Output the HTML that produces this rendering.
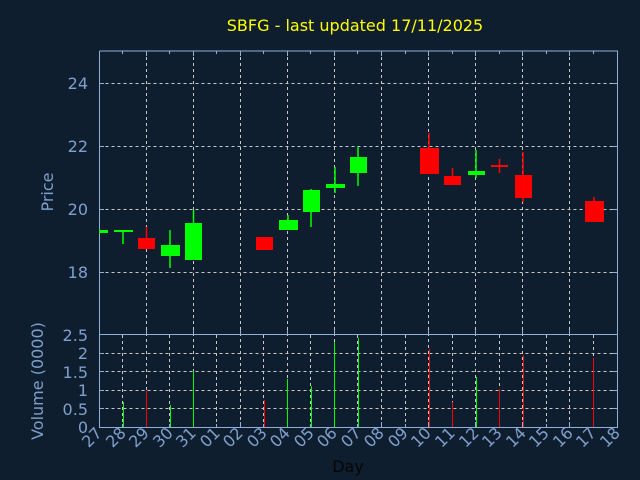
<!DOCTYPE html>
<html><head><meta charset="utf-8"><style>
html,body{margin:0;padding:0;background:#0f1e2f;width:640px;height:480px;overflow:hidden}
svg{display:block}
text{font-family:"DejaVu Sans","Liberation Sans",sans-serif}
</style></head><body>
<svg width="640" height="480" xmlns="http://www.w3.org/2000/svg">
<rect width="640" height="480" fill="#0f1e2f"/>
<text x="355" y="31" fill="#ffff00" font-size="16" text-anchor="middle">SBFG - last updated 17/11/2025</text>
<g stroke="#c8c8c8" stroke-width="1" stroke-dasharray="3,3" fill="none">
<path d="M99.5 83.5H617M99.5 146.5H617M99.5 209.5H617M99.5 272.5H617"/>
<path d="M146.5 51V427M193.5 51V427M240.5 51V427M287.5 51V427M334.5 51V427M381.5 51V427M428.5 51V427M475.5 51V427M522.5 51V427M569.5 51V427"/>
<path d="M122.5 335V427M169.5 335V427M216.5 335V427M263.5 335V427M310.5 335V427M357.5 335V427M405.5 335V427M452.5 335V427M499.5 335V427M546.5 335V427M593.5 335V427"/>
<path d="M99.5 353.5H617M99.5 371.5H617M99.5 390.5H617M99.5 408.5H617"/>
</g>
<g stroke="#8fb0d8" stroke-width="1" fill="none">
<path d="M99.5 51V427.5H617.5V51H99.5M99.5 334.5H617.5"/>
<path d="M99 83.5h5M99 146.5h5M99 209.5h5M99 272.5h5M617 83.5h-5M617 146.5h-5M617 209.5h-5M617 272.5h-5M99 353.5h5M99 371.5h5M99 390.5h5M99 408.5h5M617 353.5h-5M617 371.5h-5M617 390.5h-5M617 408.5h-5"/>
<path d="M146.5 51v5M193.5 51v5M240.5 51v5M287.5 51v5M334.5 51v5M381.5 51v5M428.5 51v5M475.5 51v5M522.5 51v5M569.5 51v5"/>
<path d="M122.5 51v3M169.5 51v3M216.5 51v3M263.5 51v3M310.5 51v3M357.5 51v3M405.5 51v3M452.5 51v3M499.5 51v3M546.5 51v3M593.5 51v3"/>
<path d="M146.5 427v-5M193.5 427v-5M240.5 427v-5M287.5 427v-5M334.5 427v-5M381.5 427v-5M428.5 427v-5M475.5 427v-5M522.5 427v-5M569.5 427v-5"/>
<path d="M122.5 427v-3M169.5 427v-3M216.5 427v-3M263.5 427v-3M310.5 427v-3M357.5 427v-3M405.5 427v-3M452.5 427v-3M499.5 427v-3M546.5 427v-3M593.5 427v-3"/>
<path d="M146.5 335v-5M193.5 335v-5M240.5 335v-5M287.5 335v-5M334.5 335v-5M381.5 335v-5M428.5 335v-5M475.5 335v-5M522.5 335v-5M569.5 335v-5"/>
</g>
<!-- candles -->
<g stroke-width="1.5">
<path stroke="#00ff00" d="M123 232V244M170 230V268M193.5 210V260M288 215V222M311 189V227M335 167V193M358 147V186M476 150V178"/>
<path stroke="#ff0000" d="M146.5 227V240M429 133V150M452.5 168V178M499.5 159V173M523 152V202M594 197V203"/>
</g>
<g fill="#00ff00">
<rect x="99" y="230" width="9" height="3"/>
<rect x="114" y="230" width="19" height="2"/>
<rect x="161" y="245" width="19" height="11"/>
<rect x="185" y="223" width="17" height="37"/>
<rect x="279" y="220" width="19" height="10"/>
<rect x="303" y="190" width="17" height="22"/>
<rect x="326" y="184" width="19" height="4"/>
<rect x="350" y="157" width="17" height="16"/>
<rect x="468" y="171" width="17" height="4"/>
</g>
<g fill="#ff0000">
<rect x="138" y="238" width="17" height="11"/>
<rect x="256" y="237" width="17" height="13"/>
<rect x="420" y="148" width="19" height="26"/>
<rect x="444" y="176" width="17" height="9"/>
<rect x="491" y="165" width="17" height="2"/>
<rect x="515" y="175" width="17" height="23"/>
<rect x="585" y="201" width="19" height="21"/>
</g>
<!-- volume -->
<g stroke-width="1">
<path stroke="#00ff00" d="M123.5 427V402M170.5 427V405M193.5 427V371M287.5 427V379M311.5 427V386M334.5 427V342M358.5 427V338M476.5 427V377"/>
<path stroke="#ff0000" d="M146.5 427V391M264.5 427V400M429.5 427V349M452.5 427V402M499.5 427V389M523.5 427V355M593.5 427V358"/>
</g>
<g fill="#7fa0cc" font-size="16" text-anchor="end">
<text x="88" y="89">24</text><text x="88" y="152">22</text><text x="88" y="215">20</text><text x="88" y="278">18</text>
<text x="88" y="341">2.5</text><text x="88" y="359">2</text><text x="88" y="378">1.5</text><text x="88" y="396">1</text><text x="88" y="415">0.5</text><text x="88" y="433">0</text>
</g>
<text transform="translate(53,192) rotate(-90)" fill="#7fa0cc" font-size="16" text-anchor="middle">Price</text>
<text transform="translate(43,381) rotate(-90)" fill="#7fa0cc" font-size="16" text-anchor="middle">Volume (0000)</text>
<g fill="#7fa0cc" font-size="16" text-anchor="end">
<text transform="translate(103,434) rotate(-45)">27</text>
<text transform="translate(127,434) rotate(-45)">28</text>
<text transform="translate(150,434) rotate(-45)">29</text>
<text transform="translate(174,434) rotate(-45)">30</text>
<text transform="translate(197,434) rotate(-45)">31</text>
<text transform="translate(221,434) rotate(-45)">01</text>
<text transform="translate(244,434) rotate(-45)">02</text>
<text transform="translate(268,434) rotate(-45)">03</text>
<text transform="translate(291,434) rotate(-45)">04</text>
<text transform="translate(315,434) rotate(-45)">05</text>
<text transform="translate(338,434) rotate(-45)">06</text>
<text transform="translate(362,434) rotate(-45)">07</text>
<text transform="translate(385,434) rotate(-45)">08</text>
<text transform="translate(409,434) rotate(-45)">09</text>
<text transform="translate(432,434) rotate(-45)">10</text>
<text transform="translate(456,434) rotate(-45)">11</text>
<text transform="translate(480,434) rotate(-45)">12</text>
<text transform="translate(503,434) rotate(-45)">13</text>
<text transform="translate(527,434) rotate(-45)">14</text>
<text transform="translate(550,434) rotate(-45)">15</text>
<text transform="translate(574,434) rotate(-45)">16</text>
<text transform="translate(597,434) rotate(-45)">17</text>
<text transform="translate(621,434) rotate(-45)">18</text>
</g>
<text x="348" y="472" fill="#050505" font-size="16" text-anchor="middle">Day</text>
</svg>
</body></html>
